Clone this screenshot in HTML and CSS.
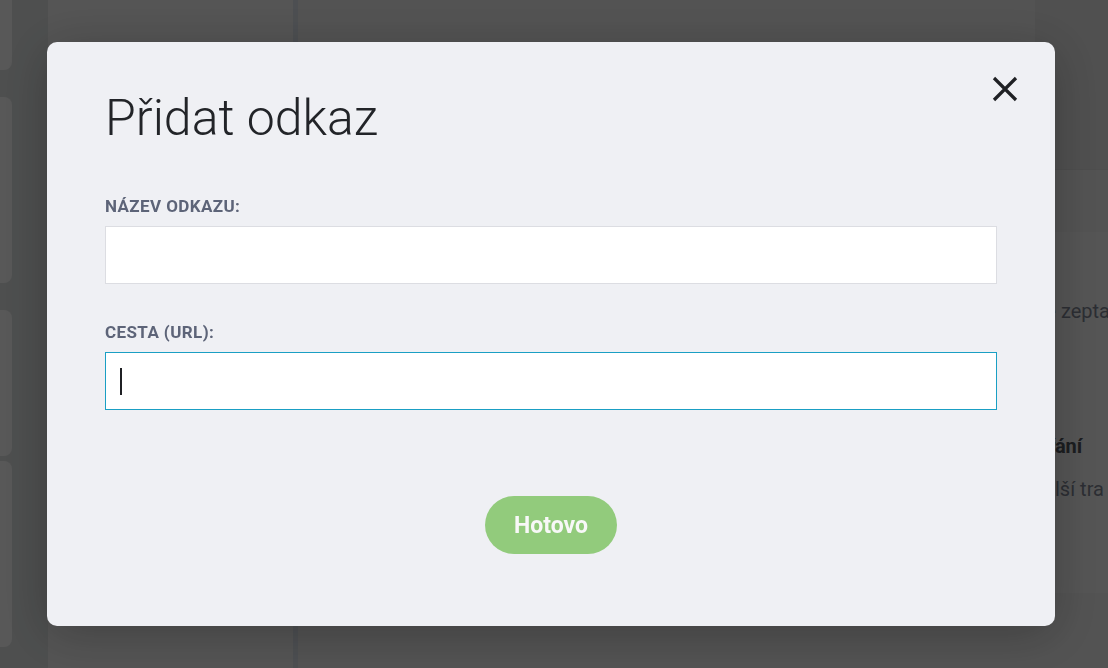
FILE: index.html
```html
<!DOCTYPE html>
<html lang="cs">
<head>
    <meta charset="UTF-8">
    <meta name="viewport" content="width=device-width, initial-scale=1.0">
    <title>Přidat odkaz</title>
    <link rel="stylesheet" href="styles.css">
</head>
<body>
    <div class="app">
        <div class="rail">
            <div class="rail-card short"></div>
            <div class="rail-card"></div>
            <div class="rail-card mid"></div>
            <div class="rail-card"></div>
        </div>
        <div class="list"></div>
        <div class="main">
            <div class="content"></div>
            <div class="aside">
                <div class="aside-head"></div>
                <div class="aside-card">
                    <p class="ask">se zeptat</p>
                    <h3>Přání</h3>
                    <p class="more">Další tra</p>
                </div>
            </div>
        </div>
    </div>

    <div class="overlay">
        <div class="modal">
            <button class="close" aria-label="Zavřít">
                <svg width="26" height="26" viewBox="0 0 26 26">
                    <path d="M2 2 L24 24 M24 2 L2 24" stroke="#1f2024" stroke-width="3.2" fill="none"/>
                </svg>
            </button>
            <h1>Přidat odkaz</h1>
            <label class="field-label" for="link-name">Název odkazu:</label>
            <input class="field" id="link-name" type="text">
            <label class="field-label second" for="link-url">Cesta (URL):</label>
            <div class="field-wrap">
                <input class="field focused" id="link-url" type="text">
                <span class="caret"></span>
            </div>
            <div class="actions">
                <button class="done">Hotovo</button>
            </div>
        </div>
    </div>
</body>
</html>
```

FILE: styles.css
```css
* {
    box-sizing: border-box;
    margin: 0;
    padding: 0;
}
body {
    font-family: Roboto, 'Liberation Sans', sans-serif;
    color: #6e7380;
    background: #d4d4d4;
    height: 100vh;
    overflow: hidden;
}

/* page behind the dialog */
.app {
    display: flex;
    height: 100vh;
}
.rail {
    width: 48px;
    flex-shrink: 0;
    background: #c3c6c6;
    display: flex;
    flex-direction: column;
    gap: 27px;
    margin-top: -20px;
}
.rail-card {
    width: 12px;
    height: 186px;
    flex-shrink: 0;
    background: #dcdcdc;
    border-radius: 0 8px 8px 0;
}
.rail-card.short {
    height: 90px;
}
.rail-card.mid {
    height: 146px;
    margin-bottom: -22px;
}
.list {
    width: 250px;
    background: #d4d4d4;
    border-right: 5px solid #c1c6cd;
    flex-shrink: 0;
}
.main {
    flex: 1;
    min-width: 0;
    display: flex;
    background: #d0d0d0;
}
.content {
    width: 737px;
    flex-shrink: 0;
}
.aside {
    flex: 1;
    min-width: 0;
    overflow: hidden;
    white-space: nowrap;
}
.aside-head {
    height: 170px;
    background: #c8c8c8;
    border-bottom: 1px solid #c2c2c2;
    margin-bottom: 62px;
}
.aside-card {
    height: 361px;
    background: #d5d5d5;
    font-size: 20px;
    line-height: 28px;
}
.aside-card .ask {
    padding-top: 65px;
    margin-bottom: 107px;
}
.aside-card h3 {
    font-size: 20px;
    font-weight: 700;
    color: #464a50;
    margin-bottom: 15px;
}
.aside-card .more {
    text-indent: -4px;
}

/* dialog */
.overlay {
    position: fixed;
    inset: 0;
    background: rgba(0, 0, 0, 0.6);
    display: flex;
    align-items: center;
    justify-content: center;
    padding-right: 6px;
}
.modal {
    position: relative;
    width: 1008px;
    height: 584px;
    background: #eff0f4;
    border-radius: 10px;
    padding: 45px 58px 0;
    box-shadow: 0 8px 50px rgba(0, 0, 0, 0.25);
}
.close {
    position: absolute;
    top: 34px;
    right: 37px;
    width: 26px;
    height: 26px;
    border: none;
    background: none;
    cursor: pointer;
}
.close svg {
    display: block;
}
.modal h1 {
    font-size: 50px;
    font-weight: 300;
    line-height: 62px;
    color: #222428;
    margin-bottom: 47px;
}
.field-label {
    display: block;
    font-size: 17px;
    font-weight: 700;
    line-height: 20px;
    letter-spacing: 0.4px;
    text-transform: uppercase;
    color: #5d6478;
    margin-bottom: 10px;
}
.field-label.second {
    margin-top: 38px;
}
.field {
    display: block;
    width: 100%;
    height: 58px;
    background: #fff;
    border: 1px solid #dcdde2;
    padding: 0 14px;
    font-family: inherit;
    font-size: 18px;
    outline: none;
}
.field.focused {
    border-color: #1a9fc4;
}
.field-wrap {
    position: relative;
}
.caret {
    position: absolute;
    left: 15px;
    top: 16px;
    width: 2px;
    height: 27px;
    background: #1f2024;
}
.actions {
    display: flex;
    justify-content: center;
    margin-top: 86px;
}
.done {
    width: 132px;
    height: 58px;
    border: none;
    border-radius: 29px;
    background: #92cb7c;
    color: #f8f8f8;
    font-family: inherit;
    font-size: 23px;
    font-weight: 700;
    cursor: pointer;
}
```
